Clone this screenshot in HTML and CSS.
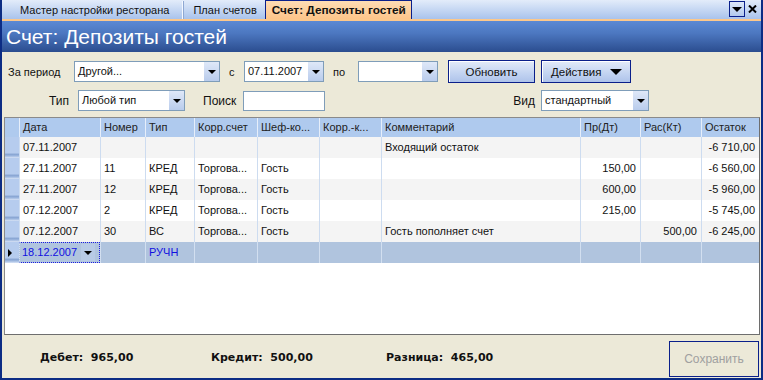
FILE: index.html
```html
<!DOCTYPE html>
<html lang="ru">
<head>
    <meta charset="UTF-8">
    <title>Счет: Депозиты гостей</title>
    <link rel="stylesheet" href="styles.css">
</head>
<body>
<div class="window">
    <div class="tabbar">
        <div class="tab first">Мастер настройки ресторана</div>
        <div class="tab second">План счетов</div>
        <div class="tab active">Счет: Депозиты гостей</div>
        <div class="tab-tools">
            <span class="tool-menu"><i class="tri"></i></span>
            <span class="tool-close">
                <svg width="9" height="8" viewBox="0 0 9 8"><path d="M1 0.5 L8 7.5 M8 0.5 L1 7.5" stroke="#000" stroke-width="2"/></svg>
            </span>
        </div>
    </div>
    <div class="title">Счет: Депозиты гостей</div>

    <div class="content">
        <div class="filter-row first-row">
            <span class="lbl lbl-period">За период</span>
            <div class="combo w-period"><span class="val">Другой...</span><span class="arrow"><i class="tri"></i></span></div>
            <span class="lbl lbl-from">с</span>
            <div class="combo w-date"><span class="val">07.11.2007</span><span class="arrow"><i class="tri"></i></span></div>
            <span class="lbl lbl-to">по</span>
            <div class="combo w-date"><span class="val"></span><span class="arrow"><i class="tri"></i></span></div>
            <button class="btn btn-refresh">Обновить</button>
            <button class="btn btn-actions">Действия <i class="tri"></i></button>
        </div>
        <div class="filter-row second-row">
            <span class="lbl big lbl-type">Тип</span>
            <div class="combo w-type"><span class="val">Любой тип</span><span class="arrow"><i class="tri"></i></span></div>
            <span class="lbl big lbl-search">Поиск</span>
            <input type="text" class="search">
            <span class="lbl big lbl-view">Вид</span>
            <div class="combo w-view"><span class="val">стандартный</span><span class="arrow"><i class="tri"></i></span></div>
        </div>

        <div class="grid">
            <div class="row head">
                <div class="rh"></div>
                <div class="c">Дата</div>
                <div class="c">Номер</div>
                <div class="c">Тип</div>
                <div class="c">Корр.счет</div>
                <div class="c">Шеф-ко...</div>
                <div class="c">Корр.-к...</div>
                <div class="c">Комментарий</div>
                <div class="c">Пр(Дт)</div>
                <div class="c">Рас(Кт)</div>
                <div class="c">Остаток</div>
            </div>
            <div class="row alt">
                <div class="rh"></div>
                <div class="c">07.11.2007</div>
                <div class="c"></div>
                <div class="c"></div>
                <div class="c"></div>
                <div class="c"></div>
                <div class="c"></div>
                <div class="c">Входящий остаток</div>
                <div class="c num"></div>
                <div class="c num"></div>
                <div class="c num">-6 710,00</div>
            </div>
            <div class="row">
                <div class="rh"></div>
                <div class="c">27.11.2007</div>
                <div class="c">11</div>
                <div class="c">КРЕД</div>
                <div class="c">Торгова...</div>
                <div class="c">Гость</div>
                <div class="c"></div>
                <div class="c"></div>
                <div class="c num">150,00</div>
                <div class="c num"></div>
                <div class="c num">-6 560,00</div>
            </div>
            <div class="row alt">
                <div class="rh"></div>
                <div class="c">27.11.2007</div>
                <div class="c">12</div>
                <div class="c">КРЕД</div>
                <div class="c">Торгова...</div>
                <div class="c">Гость</div>
                <div class="c"></div>
                <div class="c"></div>
                <div class="c num">600,00</div>
                <div class="c num"></div>
                <div class="c num">-5 960,00</div>
            </div>
            <div class="row">
                <div class="rh"></div>
                <div class="c">07.12.2007</div>
                <div class="c">2</div>
                <div class="c">КРЕД</div>
                <div class="c">Торгова...</div>
                <div class="c">Гость</div>
                <div class="c"></div>
                <div class="c"></div>
                <div class="c num">215,00</div>
                <div class="c num"></div>
                <div class="c num">-5 745,00</div>
            </div>
            <div class="row alt">
                <div class="rh"></div>
                <div class="c">07.12.2007</div>
                <div class="c">30</div>
                <div class="c">ВС</div>
                <div class="c">Торгова...</div>
                <div class="c">Гость</div>
                <div class="c"></div>
                <div class="c">Гость пополняет счет</div>
                <div class="c num"></div>
                <div class="c num">500,00</div>
                <div class="c num">-6 245,00</div>
            </div>
            <div class="row current">
                <div class="rh"><i class="pointer"></i></div>
                <div class="c editing"><span>18.12.2007</span><span class="cell-arrow"><i class="tri"></i></span></div>
                <div class="c"></div>
                <div class="c">РУЧН</div>
                <div class="c"></div>
                <div class="c"></div>
                <div class="c"></div>
                <div class="c"></div>
                <div class="c num"></div>
                <div class="c num"></div>
                <div class="c num"></div>
            </div>
        </div>

        <div class="footer">
            <span class="total t-debit">Дебет:&nbsp; 965,00</span>
            <span class="total t-credit">Кредит:&nbsp; 500,00</span>
            <span class="total t-diff">Разница:&nbsp; 465,00</span>
            <button class="btn btn-save" disabled>Сохранить</button>
        </div>
    </div>
</div>
</body>
</html>
```

FILE: styles.css
```css
html, body {
    margin: 0;
    padding: 0;
}
body {
    width: 763px;
    height: 380px;
    overflow: hidden;
    font-family: "Liberation Sans", Arial, sans-serif;
    font-size: 11px;
    color: #111;
    background: #ece9d8;
}
.window {
    box-sizing: border-box;
    width: 763px;
    height: 380px;
    border-left: 2px solid #0c2c84;
    border-right: 2px solid #0c2c84;
    border-bottom: 2px solid #0c2c84;
    display: flex;
    flex-direction: column;
    background: #ece9d8;
}

/* tabs */
.tabbar {
    height: 19px;
    display: flex;
    align-items: flex-end;
    background: linear-gradient(#e3ecfa, #a9c3ec);
    border-bottom: 2px solid #fcc88c;
    font-size: 11px;
}
.tab {
    height: 18px;
    line-height: 18px;
    padding: 0 11px;
    color: #111;
}
.tab.first {
    padding-left: 18px;
    padding-right: 13px;
    border-right: 1px solid #f4f8ff;
    box-shadow: 1px 0 0 #8fa8d2;
}
.tab.second {
    padding-left: 10px;
    padding-right: 8px;
}
.tab.active {
    height: 18px;
    padding: 0 5px 0 6px;
    background: linear-gradient(#fedcb4, #fdc58a);
    border: 1px solid #0a1f8a;
    border-bottom: none;
    font-weight: bold;
    font-size: 11.8px;
}
.tab-tools {
    margin-left: auto;
    align-self: flex-start;
    display: flex;
    align-items: center;
    padding-top: 1px;
    padding-right: 4px;
}
.tool-menu {
    width: 14px;
    height: 14px;
    border: 1px solid #0a1f8a;
    display: flex;
    align-items: center;
    justify-content: center;
}
.tool-menu .tri {
    border-left-width: 5px;
    border-right-width: 5px;
    border-top-width: 5px;
}
.tool-close {
    margin-left: 3px;
    display: flex;
}

/* title */
.title {
    height: 31px;
    line-height: 31px;
    padding-left: 4px;
    color: #fff;
    font-size: 21px;
    background: linear-gradient(#5b89d4, #4c77c0 40%, #2b4d8f);
}

.content {
    flex: 1;
    display: flex;
    flex-direction: column;
}

/* filters */
.filter-row {
    display: flex;
    align-items: center;
}
.first-row {
    margin-top: 8px;
    height: 23px;
    padding-left: 6px;
}
.second-row {
    margin-top: 7px;
    height: 21px;
    padding-left: 6px;
}
.lbl {
    box-sizing: border-box;
    white-space: nowrap;
}
.lbl.big {
    font-size: 12px;
}
.lbl-period { width: 66px; }
.lbl-from { width: 24px; padding-left: 9px; }
.lbl-to { width: 34px; padding-left: 9px; }
.lbl-type { width: 70px; text-align: right; padding-right: 9px; }
.lbl-search { width: 58px; padding-left: 18px; }
.lbl-view { width: 216px; text-align: right; padding-right: 6px; }

.tri {
    display: inline-block;
    width: 0;
    height: 0;
    border-left: 4px solid transparent;
    border-right: 4px solid transparent;
    border-top: 4px solid #000;
}
.combo {
    box-sizing: border-box;
    display: flex;
    height: 21px;
    border: 1px solid #7f9db9;
    background: #fff;
}
.combo .val {
    flex: 1;
    padding-left: 3px;
    line-height: 19px;
    white-space: nowrap;
}
.combo .arrow {
    width: 15px;
    display: flex;
    align-items: center;
    justify-content: center;
    background: linear-gradient(#dfe8f8, #b9ccec);
    border-left: 1px solid #fff;
}
.w-period { width: 146px; }
.w-date { width: 80px; }
.w-type { width: 107px; }
.w-view { width: 108px; }
.search {
    box-sizing: border-box;
    width: 82px;
    height: 20px;
    border: 1px solid #7f9db9;
    margin: 0;
    padding: 0 3px;
}

.btn {
    box-sizing: border-box;
    height: 23px;
    margin: 0;
    padding: 0;
    font-family: inherit;
    font-size: 11.5px;
    color: #111;
    border: 1px solid #0a1f8a;
    background: linear-gradient(#e3ebf9, #c2d3f1 60%, #aec3ea);
    box-shadow: inset 1px 1px 0 #fff;
}
.btn-refresh {
    width: 87px;
    margin-left: 10px;
}
.btn-actions {
    width: 90px;
    margin-left: 6px;
    display: flex;
    align-items: center;
    padding-left: 9px;
}
.btn-actions .tri {
    margin-left: auto;
    margin-right: 8px;
    border-left-width: 6px;
    border-right-width: 6px;
    border-top-width: 6px;
}

/* grid */
.grid {
    box-sizing: border-box;
    margin: 6px 1px 0 2px;
    height: 218px;
    background: #fff;
    border: 1px solid #8a8a8a;
    border-right-color: #6e6e6e;
    border-bottom-color: #6e6e6e;
}
.row {
    display: grid;
    grid-template-columns: 14px 81px 45px 49px 63px 62px 62px 199px 60px 61px 1fr;
    height: 21px;
    background: #fff;
}
.row.alt {
    background: #f4f4f4;
}
.row.head {
    height: 19px;
    background: #afcaee;
    color: #222;
}
.row .c {
    box-sizing: border-box;
    padding: 0 4px 0 3px;
    line-height: 21px;
    white-space: nowrap;
    overflow: hidden;
    border-left: 1px solid #cddcf0;
}
.row.head .c {
    line-height: 19px;
    padding-left: 3px;
    border-left: 1px solid #e6eefa;
}
.row .c.num {
    text-align: right;
}
.rh {
    background: linear-gradient(#b6ccee 0, #b6ccee 76%, #87a4d2 82%, #9db7df 90%, #d9e4f6 100%);
    display: flex;
    align-items: center;
    padding-left: 3px;
}
.row.head .rh {
    background: #afcaee;
}
.row.current {
    background: #b0c4de;
    color: #1010e0;
}
.row.current .c {
    border-left-color: #d2dff0;
}
.pointer {
    width: 0;
    height: 0;
    border-top: 4px solid transparent;
    border-bottom: 4px solid transparent;
    border-left: 4px solid #000;
}
.c.editing {
    display: flex;
    align-items: center;
    border: 1px dotted #1c1ce0;
    padding-left: 2px;
}
.cell-arrow {
    margin-left: auto;
    width: 14px;
    height: 17px;
    display: flex;
    align-items: center;
    justify-content: center;
    background: #b8cbe6;
}

/* footer */
.footer {
    flex: 1;
    display: flex;
    align-items: center;
    padding-left: 38px;
    padding-right: 2px;
}
.total {
    font-family: "DejaVu Sans", Verdana, sans-serif;
    font-weight: bold;
    font-size: 11px;
    color: #111;
    white-space: nowrap;
}
.t-debit { width: 171px; }
.t-credit { width: 175px; }
.t-diff { flex: 1; }
.btn-save {
    width: 90px;
    height: 36px;
    margin-top: 6px;
    margin-bottom: 2px;
    color: #a0a0a0;
    background: #ece9d8;
    box-shadow: none;
    font-size: 12px;
}
```
